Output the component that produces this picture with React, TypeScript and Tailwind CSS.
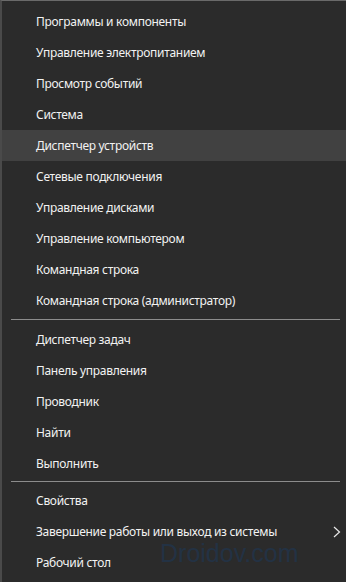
const groups: string[][] = [
  [
    'Программы и компоненты',
    'Управление электропитанием',
    'Просмотр событий',
    'Система',
    'Диспетчер устройств',
    'Сетевые подключения',
    'Управление дисками',
    'Управление компьютером',
    'Командная строка',
    'Командная строка (администратор)',
  ],
  ['Диспетчер задач', 'Панель управления', 'Проводник', 'Найти', 'Выполнить'],
  ['Свойства', 'Завершение работы или выход из системы', 'Рабочий стол'],
];

function Item({ label }: { label: string }) {
  const active = label === 'Диспетчер устройств';
  const sub = label.startsWith('Завершение');
  return (
    <div
      className={`relative flex items-center h-[31px] pl-[34px] pr-3 text-[12px] tracking-[-0.3px] text-[#f2f2f2] ${
        active ? 'bg-[#414141]' : ''
      }`}
    >
      <span>{label}</span>
      {sub && (
        <svg
          className="absolute right-[5px] top-[10px]"
          width="8"
          height="12"
          viewBox="0 0 8 12"
          fill="none"
        >
          <path d="M1 1l5.5 5L1 11" stroke="#e8e8e8" strokeWidth="1.2" />
        </svg>
      )}
    </div>
  );
}

export default function App() {
  return (
    <div
      className="relative w-[346px] h-[582px] bg-[#2b2b2b] border-l-2 border-t border-l-[#4a4a4a] border-t-[#6a6a6a] overflow-hidden"
      style={{ fontFamily: '"Noto Sans", "Open Sans", sans-serif' }}
    >
      <div className="pt-[5px]">
        {groups.map((group, i) => (
          <div key={i}>
            {i > 0 && (
              <div className={`${i === 1 ? 'mt-[3px] mb-[4px]' : 'mt-[2px] mb-[3px]'} ml-[9px] mr-[6px] h-px bg-[#8c8c8c]`} />
            )}
            {group.map((label) => (
              <Item key={label} label={label} />
            ))}
          </div>
        ))}
      </div>

      {/* watermark */}
      <div
        className="absolute left-[158px] top-[540px] text-[25px] leading-none text-[#233244] pointer-events-none"
        style={{ fontFamily: '"Liberation Sans", Arial, sans-serif' }}
      >
        Droidov.com
      </div>
    </div>
  );
}
